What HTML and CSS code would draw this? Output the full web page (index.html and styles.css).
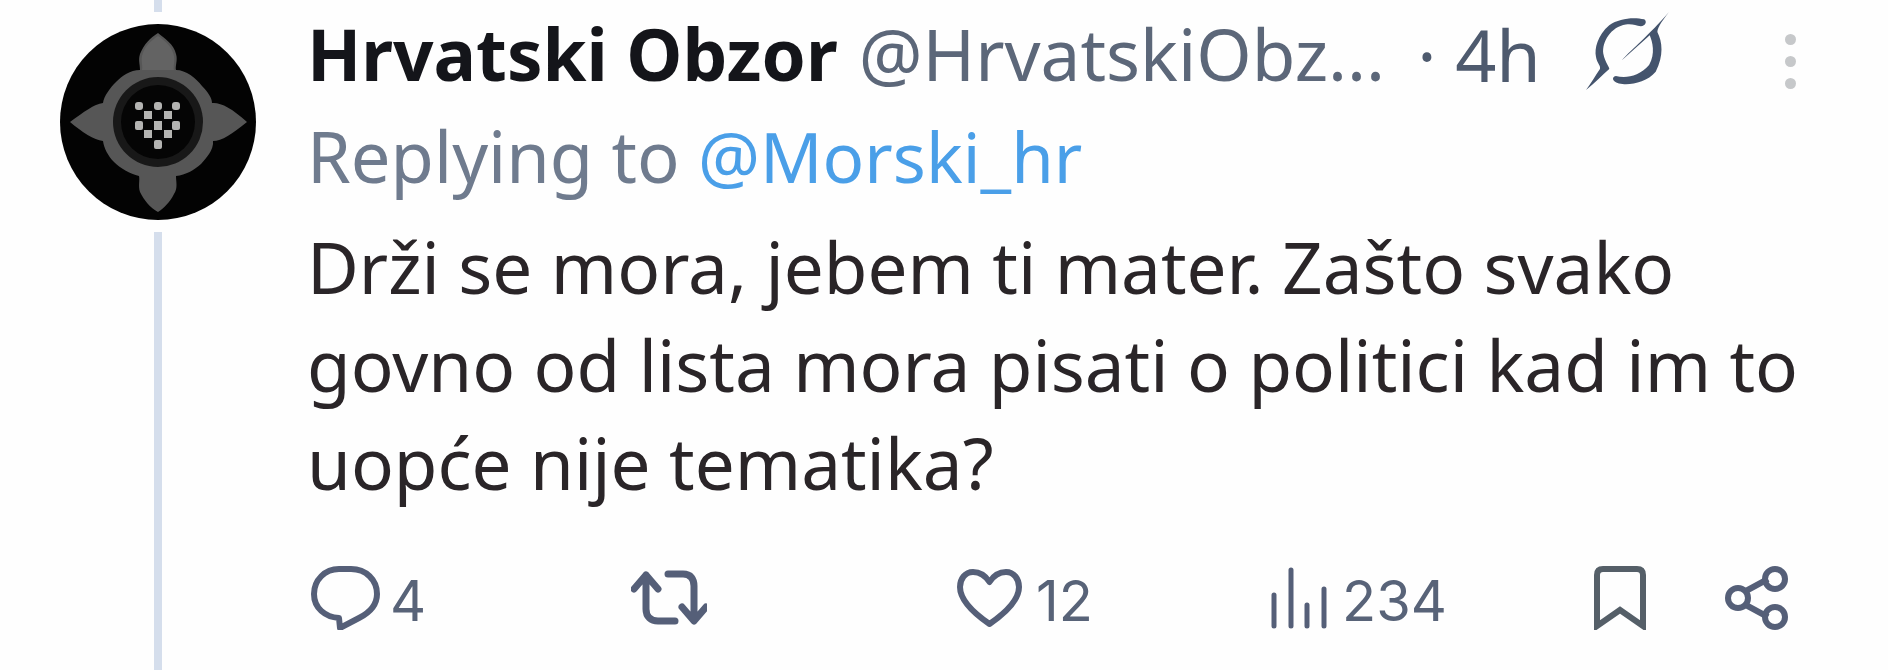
FILE: index.html
```html
<!DOCTYPE html>
<html lang="hr">
<head>
<meta charset="utf-8">
<title>Hrvatski Obzor</title>
<link rel="stylesheet" href="styles.css">
</head>
<body>
<article class="tweet">
  <div class="rail">
    <div class="line-top"></div>
    <svg class="avatar" viewBox="0 0 196 196" aria-label="avatar">
      <circle cx="98" cy="98" r="98" fill="#030303"/>
      <path d="M98 9C104 14 114 20 116 30C118 36 115 42 116 46C126 46 136 54 142 62C148 68 152 74 152 79C160 78 172 84 187 98C172 110 162 117 153 117C154 126 146 134 141 140C134 146 126 151 116 152C116 158 118 164 114 170C110 178 104 184 98 188C90 184 84 176 80 168C78 162 80 156 79 152C70 150 60 144 54 138C48 132 44 124 43 117C34 116 22 108 10 98C24 88 34 80 43 79C44 72 50 64 56 58C62 52 70 46 80 46C80 40 78 36 80 30C84 20 90 14 98 9Z" fill="#565656"/>
      <path d="M98 12C104 16 112 22 114 32C115 38 113 42 114 46H82C83 42 81 38 82 32C84 22 92 16 98 12Z" fill="#636363"/>
      <circle cx="98" cy="98" r="45" fill="#181818"/>
      <circle cx="98" cy="98" r="37" fill="#050505"/>
      <g fill="#b4b4b2">
        <rect x="75" y="78" width="8" height="8" rx="3"/><rect x="94" y="78" width="8" height="8" rx="3"/><rect x="112" y="78" width="8" height="8" rx="3"/>
        <rect x="84" y="87" width="8" height="8"/><rect x="104" y="87" width="8" height="8"/>
        <rect x="75" y="97" width="8" height="9" rx="2"/><rect x="94" y="97" width="8" height="9"/><rect x="112" y="97" width="8" height="9" rx="2"/>
        <rect x="84" y="106" width="8" height="8"/><rect x="104" y="106" width="8" height="8"/>
        <rect x="94" y="116" width="8" height="9" rx="2"/>
      </g>
    </svg>
    <div class="line-bottom"></div>
  </div>
  <div class="main">
    <header class="head">
      <span class="name">Hrvatski Obzor</span>
      <span class="handle">@HrvatskiObz...</span>
      <span class="time">· 4h</span>
      <svg class="grok" viewBox="0 0 250 235" aria-hidden="true">
        <path d="M250 0C235 20 215 45 215 60C230 90 235 130 210 180C185 210 140 220 110 217C78 215 75 195 90 193C120 200 160 195 190 160C210 125 200 90 192 70L108 145C140 110 190 70 250 0Z" fill="#44546d"/>
        <path d="M175 22C145 15 100 18 70 40C35 70 25 110 30 135C33 155 45 160 42 172C30 190 15 215 0 235C25 215 50 190 70 172C72 166 58 155 52 125C48 90 75 45 120 38C140 35 150 42 165 43C180 42 185 28 175 22Z" fill="#44546d"/>
      </svg>
      <span class="more" aria-hidden="true"><i></i><i></i><i></i></span>
    </header>
    <p class="reply">Replying to <a class="mention">@Morski_hr</a></p>
    <p class="text">Drži se mora, jebem ti mater. Zašto svako govno od lista mora pisati o politici kad im to uopće nije tematika?</p>
    <div class="actions">
      <div class="act">
        <svg class="ic ic-bubble" viewBox="0 0 69 64" aria-hidden="true"><path d="M28 3H40C55 3 66 14 66 28C66 40 58 47 48 52L29 62L28 52C14 51 3 42 3 28C3 14 14 3 28 3Z" fill="none" stroke="#555f78" stroke-width="6" stroke-linejoin="round"/></svg>
        <span class="count count-tight">4</span>
      </div>
      <div class="act">
        <svg class="ic ic-rt" viewBox="0 0 76 58" aria-hidden="true"><path d="M15 6V40C15 48 20 52 27 52H44M37 5H52C60 5 63 10 63 17V50M3 20L15 6L27 20M51 38L63 52L75 38" fill="none" stroke="#555f78" stroke-width="7" stroke-linejoin="round" stroke-linecap="round"/></svg>
      </div>
      <div class="act">
        <svg class="ic ic-heart" viewBox="0 0 65 58" aria-hidden="true"><path d="M32.500 13C28 6 22 3 16 3C8 3 3 10 3 18C3 32 18 45 32.500 55C47 45 62 32 62 18C62 10 57 3 49 3C43 3 37 6 32.500 13Z" fill="none" stroke="#555f78" stroke-width="6" stroke-linejoin="round"/></svg>
        <span class="count">12</span>
      </div>
      <div class="act">
        <svg class="ic ic-bars" viewBox="0 0 56 62" aria-hidden="true"><path d="M3 28V59M20 3V59M36 38V59M53 22V59" fill="none" stroke="#555f78" stroke-width="5" stroke-linecap="round"/></svg>
        <span class="count">234</span>
      </div>
      <div class="act">
        <svg class="ic ic-mark" viewBox="0 0 52 64" aria-hidden="true"><path d="M3 60V9C3 5 5 3 9 3H43C47 3 49 5 49 9V60L26 44Z" fill="none" stroke="#555f68" stroke-width="6"/></svg>
      </div>
      <div class="act">
        <svg class="ic ic-share" viewBox="0 0 63 64" aria-hidden="true"><path d="M19 26L43 13M19 38L43 51" stroke="#555f78" stroke-width="6"/><circle cx="13" cy="32" r="10" fill="none" stroke="#555f78" stroke-width="6"/><circle cx="50" cy="13" r="10" fill="none" stroke="#555f78" stroke-width="6"/><circle cx="50" cy="51" r="10" fill="none" stroke="#555f78" stroke-width="6"/></svg>
      </div>
    </div>
  </div>
</article>
</body>
</html>
```
FILE: styles.css
```css
html, body {
  margin: 0;
  height: 670px;
  overflow: hidden;
  background: #fefefe;
}
.tweet {
  display: flex;
  height: 670px;
  font-family: "Noto Sans", sans-serif;
}
.rail {
  width: 307px;
  flex: none;
  display: flex;
  flex-direction: column;
  align-items: center;
  padding-left: 9px;
  box-sizing: border-box;
}
.line-top {
  width: 8px;
  height: 12px;
  background: #d5deec;
  margin-bottom: 12px;
}
.avatar {
  width: 196px;
  height: 196px;
  flex: none;
}
.line-bottom {
  width: 8px;
  flex: 1;
  margin-top: 12px;
  background: #d5deec;
}
.main {
  flex: 1;
  min-width: 0;
}
.head {
  display: flex;
  align-items: center;
  height: 107px;
  white-space: nowrap;
}
.name {
  font-size: 71px;
  font-weight: 700;
  color: #14151a;
}
.handle {
  font-size: 71px;
  color: #5c6779;
  margin-left: 21px;
}
.time {
  font-size: 72px;
  color: #4e5a6e;
  margin-left: 32px;
}
.grok {
  width: 85px;
  height: 78px;
  margin-left: 44px;
  margin-top: -5px;
}
.more {
  display: flex;
  flex-direction: column;
  gap: 11px;
  margin-left: 115px;
  margin-top: 15px;
}
.more i {
  width: 11px;
  height: 11px;
  border-radius: 50%;
  background: #c6c8ca;
}
.reply {
  margin: 0;
  font-size: 70.5px;
  line-height: 98px;
  color: #6f7b8e;
  white-space: nowrap;
}
.mention {
  font-size: 69px;
  color: #4a9fe8;
}
.text {
  margin: 13px 0 0;
  width: 1510px;
  font-size: 71px;
  line-height: 98px;
  color: #2a2528;
}
.actions {
  display: grid;
  grid-template-columns: 320px 326px 314px 323px 131px 63px;
  align-items: center;
  padding-left: 4px;
  margin-top: 54px;
}
.act {
  display: flex;
  align-items: center;
}
.ic {
  flex: none;
}
.ic-bubble { width: 69px; height: 64px; }
.ic-rt { width: 76px; height: 58px; }
.ic-heart { width: 65px; height: 58px; }
.ic-bars { width: 56px; height: 62px; }
.ic-mark { width: 52px; height: 64px; }
.ic-share { width: 63px; height: 64px; }
.count {
  font-family: "Inter", sans-serif;
  font-size: 56px;
  line-height: 1;
  color: #586378;
  margin-left: 14px;
  padding-top: 5px;
}
.count-tight {
  margin-left: 10px;
}
.ic-bars + .count {
  margin-left: 15px;
}
```
